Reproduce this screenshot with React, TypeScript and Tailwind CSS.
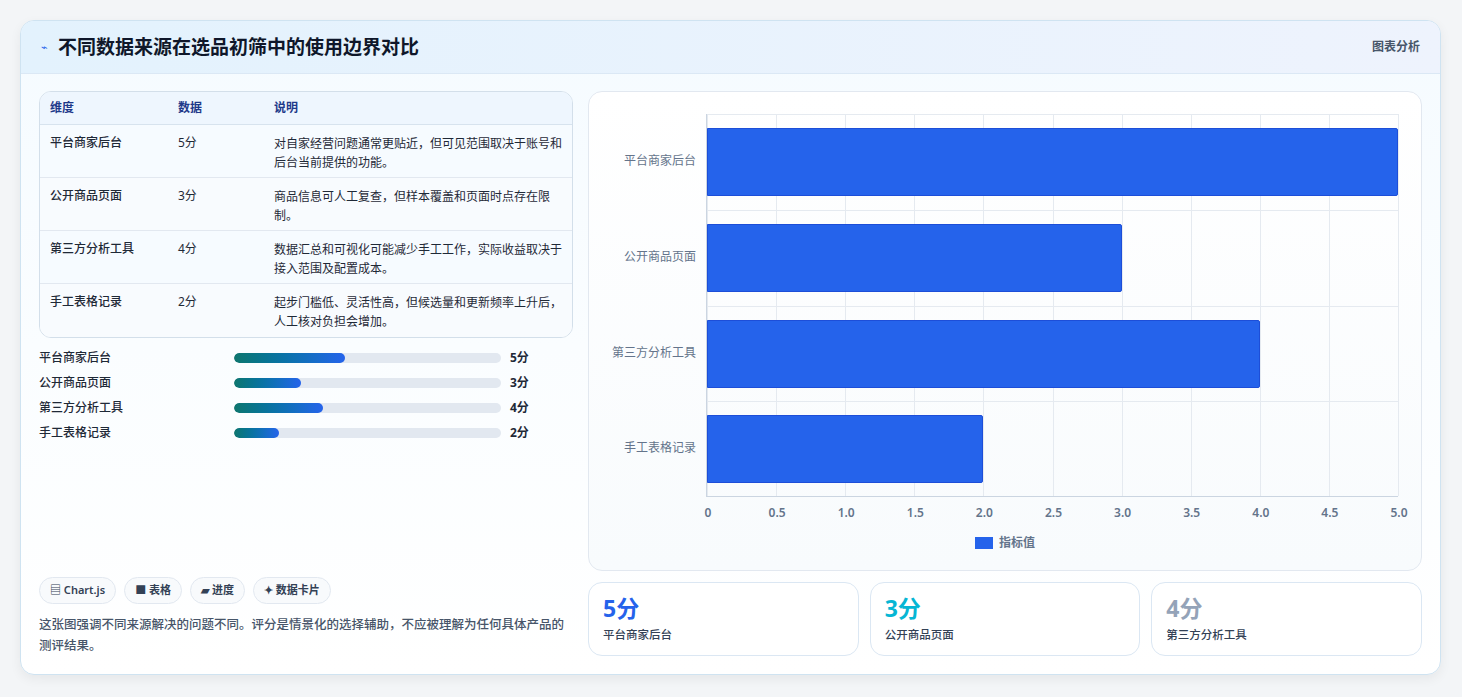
import React from "react";

const rows = [
  ["平台商家后台", "5分", "对自家经营问题通常更贴近，但可见范围取决于账号和后台当前提供的功能。"],
  ["公开商品页面", "3分", "商品信息可人工复查，但样本覆盖和页面时点存在限制。"],
  ["第三方分析工具", "4分", "数据汇总和可视化可能减少手工工作，实际收益取决于接入范围及配置成本。"],
  ["手工表格记录", "2分", "起步门槛低、灵活性高，但候选量和更新频率上升后，人工核对负担会增加。"],
];
const vals = [5, 3, 4, 2];
const ticks = ["0", "0.5", "1.0", "1.5", "2.0", "2.5", "3.0", "3.5", "4.0", "4.5", "5.0"];

export default function App() {
  const font = { fontFamily: '"Noto Sans", "Noto Sans CJK SC", sans-serif' };
  return (
    <div className="w-[1462px] h-[697px] bg-[#f3f5f7] pt-[20px] pl-[20px]" style={font}>
      <div className="w-[1421px] h-[655px] rounded-[14px] border border-[#cfe3f1] bg-gradient-to-b from-[#f5fbff] to-white shadow-[0_4px_12px_rgba(0,0,0,0.06)] overflow-hidden flex flex-col">
        <div className="h-[55px] flex items-center justify-between px-[20px] bg-gradient-to-r from-[#e3f2fd] to-[#eef3fd] border-b border-[#dbe8f5]">
          <div className="flex items-center gap-[10px]">
            <span className="text-[#2563eb] text-[11px]">⌁</span>
            <span className="text-[19px] font-bold text-[#0f172a]">不同数据来源在选品初筛中的使用边界对比</span>
          </div>
          <span className="text-[12px] font-semibold text-[#475569]">图表分析</span>
        </div>
        <div className="flex-1 flex gap-[15px] px-[18px] pt-[17px] pb-[18px]">
          <div className="w-[534px] flex flex-col">
            <div className="rounded-[12px] border border-[#d3dfea] bg-white overflow-hidden">
              <div className="flex h-[33px] items-center bg-[#eef6fe] border-b border-[#d7e3ee] text-[12px] font-semibold text-[#1e3a8a]">
                <div className="w-[138px] pl-[10px]">维度</div>
                <div className="w-[96px]">数据</div>
                <div className="flex-1">说明</div>
              </div>
              {rows.map((r, i) => (
                <div key={i} className={`flex h-[53px] pt-[9px] text-[12px] text-[#1f2937] ${i < 3 ? "border-b border-[#e2e8f0]" : ""} ${i % 2 === 1 ? "bg-[#f8fbfe]" : "bg-[#f6fbff]"}`}>
                  <div className="w-[138px] pl-[10px] font-medium">{r[0]}</div>
                  <div className="w-[96px]">{r[1]}</div>
                  <div className="flex-1 pr-[8px] leading-[19px]">{r[2]}</div>
                </div>
              ))}
            </div>
            <div className="mt-[11px] flex flex-col gap-[7px]">
              {rows.map((r, i) => (
                <div key={i} className="flex items-center h-[18px] text-[12px] font-medium text-[#1f2937]">
                  <div className="w-[195px]">{r[0]}</div>
                  <div className="w-[267px] h-[10px] rounded-full bg-[#e2e8f0] overflow-hidden">
                    <div className="h-full rounded-full bg-gradient-to-r from-[#0f766e] to-[#2563eb]" style={{ width: `${(vals[i] / 12) * 100}%` }} />
                  </div>
                  <div className="ml-[9px] font-bold text-[12px]">{r[1]}</div>
                </div>
              ))}
            </div>
            <div className="mt-auto">
              <div className="flex gap-[8px] text-[11px] font-semibold text-[#334155]">
                {["▤ Chart.js", "■ 表格", "▰ 进度", "✦ 数据卡片"].map((t) => (
                  <span key={t} className="h-[27px] px-[10px] flex items-center rounded-full border border-[#e2e8f0] bg-[#f8fafc]">{t}</span>
                ))}
              </div>
              <p className="mt-[10px] text-[12.5px] leading-[21px] font-medium text-[#475569]">这张图强调不同来源解决的问题不同。评分是情景化的选择辅助，不应被理解为任何具体产品的测评结果。</p>
            </div>
          </div>
          <div className="flex-1 flex flex-col gap-[11px]">
            <div className="h-[480px] rounded-[14px] border border-[#e2e8f0] bg-gradient-to-b from-white to-[#f8fbfd] relative">
              <div className="absolute left-[117px] top-[22px] w-[692px] h-[383px] border-l border-b border-[#cbd5e1]">
                {ticks.map((t, i) => (
                  <div key={t} className="absolute top-0 h-full border-l border-[#e5eaf0]" style={{ left: `${i * 10}%` }}>
                    <span className="absolute top-[390px] -translate-x-1/2 text-[12px] font-semibold text-[#64748b]">{t}</span>
                  </div>
                ))}
                {[0, 1, 2, 3].map((i) => (
                  <div key={i} className="absolute left-0 w-full border-t border-[#e5eaf0]" style={{ top: `${i * 95.75}px` }} />
                ))}
                {rows.map((r, i) => (
                  <div key={i} className="absolute left-0" style={{ top: `${14 + i * 95.75}px`, width: `${vals[i] * 20}%` }}>
                    <div className="h-[68px] bg-[#2563eb] rounded-r-[2px] border border-[#1d4ed8]" />
                    <span className="absolute right-[calc(100%+11px)] top-[24px] whitespace-nowrap text-[12px] text-[#64748b]" style={{ right: "auto", left: "-110px", width: "99px", textAlign: "right" }}>{r[0]}</span>
                  </div>
                ))}
              </div>
              <div className="absolute top-[442px] left-0 w-full flex justify-center items-center gap-[6px] text-[12px] font-semibold text-[#64748b]">
                <span className="w-[18px] h-[12px] bg-[#2563eb]" />
                <span>指标值</span>
              </div>
            </div>
            <div className="flex gap-[11px]">
              {[["5分", "text-[#2563eb]", "平台商家后台"], ["3分", "text-[#06b6d4]", "公开商品页面"], ["4分", "text-[#94a3b8]", "第三方分析工具"]].map((c) => (
                <div key={c[2]} className="flex-1 h-[74px] rounded-[14px] border border-[#dbe7f3] bg-white px-[14px] pt-[9px]">
                  <div className={`text-[23px] font-bold leading-[32px] ${c[1]}`}>{c[0]}</div>
                  <div className="text-[11.5px] font-medium text-[#334155] mt-[2px]">{c[2]}</div>
                </div>
              ))}
            </div>
          </div>
        </div>
      </div>
    </div>
  );
}
